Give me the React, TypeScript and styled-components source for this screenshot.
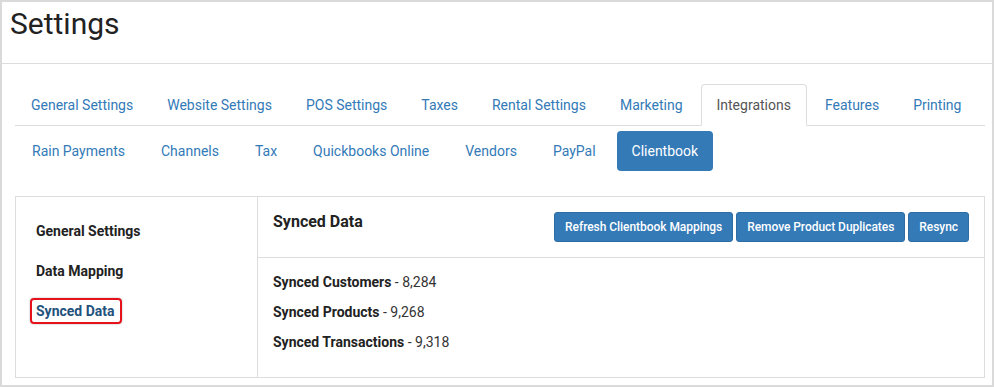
import styled, { createGlobalStyle } from "styled-components";

const GlobalStyle = createGlobalStyle`
  html, body {
    margin: 0;
    padding: 0;
    background: #fff;
  }
  body {
    font-family: Roboto, "Liberation Sans", sans-serif;
    font-size: 14px;
    line-height: 20px;
    color: #333;
  }
  * {
    box-sizing: border-box;
  }
`;

const topTabs = [
  "General Settings",
  "Website Settings",
  "POS Settings",
  "Taxes",
  "Rental Settings",
  "Marketing",
  "Integrations",
  "Features",
  "Printing",
];

const subTabs = [
  "Rain Payments",
  "Channels",
  "Tax",
  "Quickbooks Online",
  "Vendors",
  "PayPal",
  "Clientbook",
];

const sideLinks = ["General Settings", "Data Mapping", "Synced Data"];

const stats = [
  { label: "Synced Customers", value: "8,284" },
  { label: "Synced Products", value: "9,268" },
  { label: "Synced Transactions", value: "9,318" },
];

const Frame = styled.div`
  width: 994px;
  height: 387px;
  border: 2px solid #dadada;
  background: #fff;
  overflow: hidden;
`;

const PageHeader = styled.header`
  height: 62px;
  padding: 3px 8px 0;
  border-bottom: 1px solid #dddddd;
`;

const PageTitle = styled.h1`
  margin: 0;
  font-size: 30px;
  line-height: 38px;
  font-weight: 400;
  color: #222;
`;

const Body = styled.div`
  padding: 20px 7px 0 13px;
`;

const Tabs = styled.ul`
  display: flex;
  gap: 2px;
  margin: 0;
  padding: 0;
  list-style: none;
  border-bottom: 1px solid #dddddd;
`;

const Tab = styled.li<{ $active?: boolean }>`
  margin-bottom: -1px;
  padding: 10px 15px 10px;
  border: 1px solid ${({ $active }) => ($active ? "#dddddd" : "transparent")};
  border-bottom-color: ${({ $active }) => ($active ? "#fff" : "transparent")};
  border-radius: 4px 4px 0 0;
  background: ${({ $active }) => ($active ? "#fff" : "transparent")};
  color: ${({ $active }) => ($active ? "#555" : "#337ab7")};
  white-space: nowrap;
`;

const Pills = styled.ul`
  display: flex;
  gap: 6px;
  margin: 5px 0 0;
  padding: 0 0 0 2px;
  list-style: none;
`;

const Pill = styled.li<{ $active?: boolean }>`
  padding: 10px 15px;
  border-radius: 4px;
  background: ${({ $active }) => ($active ? "#337ab7" : "transparent")};
  color: ${({ $active }) => ($active ? "#fff" : "#337ab7")};
  white-space: nowrap;
`;

const Panel = styled.section`
  display: grid;
  grid-template-columns: 241px 1fr;
  margin-top: 25px;
  border: 1px solid #dddddd;
`;

const SideNav = styled.nav`
  display: flex;
  flex-direction: column;
  align-items: flex-start;
  padding: 14px 5px;
`;

const SideLink = styled.div<{ $active?: boolean }>`
  padding: 10px 15px;
  font-weight: 700;
  color: ${({ $active }) => ($active ? "#23527c" : "#222")};
`;

const Highlight = styled.span`
  display: inline-block;
  margin: -3px -7px -3px -6px;
  padding: 1px 5px 1px 4px;
  border: 2px solid #e5121c;
  border-radius: 4px;
  box-shadow: 0 0 2px rgba(0, 0, 0, 0.35);
`;

const Content = styled.div`
  border-left: 1px solid #dddddd;
`;

const ContentHeader = styled.div`
  display: flex;
  justify-content: space-between;
  align-items: flex-start;
  padding: 15px;
  border-bottom: 1px solid #dddddd;
`;

const ContentTitle = styled.h3`
  margin: 0;
  font-size: 16px;
  line-height: 20px;
  font-weight: 700;
  color: #222;
`;

const ButtonGroup = styled.div`
  display: flex;
  gap: 3px;
`;

const Button = styled.button`
  padding: 5px 10px;
  border: 1px solid #2e6da4;
  border-radius: 3px;
  background: #337ab7;
  color: #fff;
  font-family: Roboto, "Liberation Sans", sans-serif;
  font-size: 12px;
  line-height: 18px;
  font-weight: 500;
  letter-spacing: -0.05px;
  white-space: nowrap;
`;

const ContentBody = styled.div`
  padding: 14px 15px 15px;
`;

const StatRow = styled.p`
  margin: 0 0 10px;
  color: #333;
`;

const StatLabel = styled.strong`
  font-weight: 700;
  color: #222;
`;

export default function App() {
  return (
    <>
      <GlobalStyle />
      <Frame>
        <PageHeader>
          <PageTitle>Settings</PageTitle>
        </PageHeader>
        <Body>
          <Tabs>
            {topTabs.map((t) => (
              <Tab key={t} $active={t === "Integrations"}>
                {t}
              </Tab>
            ))}
          </Tabs>
          <Pills>
            {subTabs.map((t) => (
              <Pill key={t} $active={t === "Clientbook"}>
                {t}
              </Pill>
            ))}
          </Pills>
          <Panel>
            <SideNav>
              {sideLinks.map((l) =>
                l === "Synced Data" ? (
                  <SideLink key={l} $active>
                    <Highlight>{l}</Highlight>
                  </SideLink>
                ) : (
                  <SideLink key={l}>{l}</SideLink>
                )
              )}
            </SideNav>
            <Content>
              <ContentHeader>
                <ContentTitle>Synced Data</ContentTitle>
                <ButtonGroup>
                  <Button>Refresh Clientbook Mappings</Button>
                  <Button>Remove Product Duplicates</Button>
                  <Button>Resync</Button>
                </ButtonGroup>
              </ContentHeader>
              <ContentBody>
                {stats.map((s) => (
                  <StatRow key={s.label}>
                    <StatLabel>{s.label}</StatLabel> - {s.value}
                  </StatRow>
                ))}
              </ContentBody>
            </Content>
          </Panel>
        </Body>
      </Frame>
    </>
  );
}
